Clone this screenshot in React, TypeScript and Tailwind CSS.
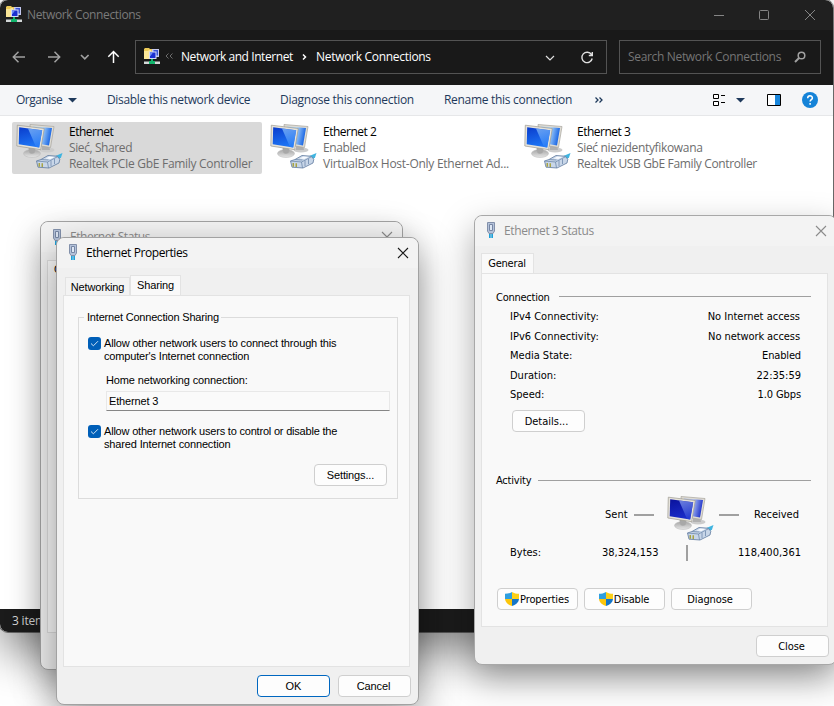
import type { ReactNode } from "react";

const segoe = "font-['Open_Sans','Noto_Sans',sans-serif]";
const tahoma = "font-['DejaVu_Sans_Condensed','DejaVu_Sans',sans-serif]";
const sans = "font-['Liberation_Sans',Arial,sans-serif]";

function FolderNetIcon() {
  return (
    <svg width="16" height="17" viewBox="0 0 16 17" className="shrink-0">
      <path d="M0 1l1-1h4l1 1h6v10H0z" fill="#ecca58" />
      <path d="M0 3h4l1-1h2v9H0z" fill="#fbe697" />
      <path d="M8 1h7v8H8z" fill="#c4c9f0" />
      <path d="M9.500 2H14v5.500H9.500z" fill="#3a54d4" />
      <path d="M5 3.500h7.500V11H5z" fill="#d3d9f6" />
      <path d="M6 4.500h5.500V10H6z" fill="#1a2fd0" />
      <path d="M6 4.500h3L6.500 8H6z" fill="#6c8cf4" />
      <path d="M7 11h2v2H7zM5 13h6v3H5z" fill="#12b46c" />
      <path d="M0 13.500h5V16H0zM11 13.500h5V16h-5z" fill="#d3d8d8" />
    </svg>
  );
}

function ComputersIcon({ dark = false }: { dark?: boolean }) {
  const id = dark ? "pc-dark" : "pc-light";
  return (
    <svg width="48" height="48" viewBox="0 0 48 48" className="shrink-0">
      <defs>
        <linearGradient id={id} x1="0" y1="0" x2=".3" y2="1">
          <stop offset="0" stopColor={dark ? "#0a129c" : "#0a3ccc"} />
          <stop offset="1" stopColor={dark ? "#1a2cc8" : "#1d74f4"} />
        </linearGradient>
        <linearGradient id={id + "-w"} x1="0" y1="0" x2=".3" y2="1">
          <stop offset="0" stopColor={dark ? "#8ea4f0" : "#8cc0fa"} />
          <stop offset="1" stopColor={dark ? "#2c44d4" : "#2f82f8"} />
        </linearGradient>
        <linearGradient id={id + "-b"} x1="0" y1="0" x2="1" y2=".2">
          <stop offset=".5" stopColor={dark ? "#a9bcf4" : "#a8d4fc"} />
          <stop offset="1" stopColor={dark ? "#2438cc" : "#1a66e4"} />
        </linearGradient>
        <linearGradient id={id + "-s"} x1="0" y1="0" x2="0" y2="1">
          <stop offset="0" stopColor="#a4a4a4" />
          <stop offset="1" stopColor="#e6e6e6" />
        </linearGradient>
      </defs>
      <ellipse cx="31" cy="27" rx="7.500" ry="2.500" fill="#cccccc" />
      <path d="M26 22h7l1 5h-8z" fill="#b0b0b0" />
      <path d="M14 1.500l24 2-3.500 21-19-3z" fill="#dfdcd4" stroke="#a8a59d" strokeWidth=".7" />
      <path d="M17 3.500l19 1.600-3 17.400L18 20z" fill={`url(#${id}-b)`} />
      <ellipse cx="16" cy="30.500" rx="8.500" ry="4" fill={`url(#${id}-s)`} stroke="#b8b8b8" strokeWidth=".5" />
      <path d="M12.500 25h7l-1 5q-3 1.500-5 0z" fill="#a8a8a8" />
      <path d="M1.300 2.200l27 3.300-3.600 21.200L.8 23z" fill="#e6e3db" stroke="#9c998f" strokeWidth=".7" />
      <path d="M3.200 4.300l23 2.900-3 17.200L2.700 21.300z" fill={`url(#${id})`} />
      <path d="M12 5.400l14.200 1.800-3 17.200-3.200-.4z" fill={`url(#${id}-w)`} opacity=".75" />
      <path d="M37 34l9.500-4-1.500 4.500-4 3z" fill="#3fb4e0" />
      <path d="M20.500 38l4.500-1.500 7-4 9 .7 2.800 3L43 40l-10 5-11-.8z" fill="#c8d6e8" stroke="#5f7a9e" strokeWidth=".8" />
      <path d="M20.500 38l11 1 10-5.300M31.500 39l1 6M25 36.500l7.500.5M35 37.500v5.500M38.500 36v5" fill="none" stroke="#6f89ac" strokeWidth=".8" />
      <path d="M22.500 40h1.500v3.800h-1.500zM25.500 40.200H27V44h-1.500z" fill="#a8a344" />
      <path d="M29.500 35.500l4-2 5 .5-4 2z" fill="#f8fbff" />
    </svg>
  );
}

function PlugIcon() {
  return (
    <svg width="10" height="17" viewBox="0 0 10 17" className="shrink-0">
      <path d="M1.500.5h7v8.500l-1.500 2.500H3L1.500 9z" fill="#b4c2da" stroke="#8290aa" />
      <path d="M3.500 2.500h3v6h-3z" fill="#dde6f3" stroke="#7686a4" />
      <path d="M3 12h1.700v4H3zM5.300 12H7v4H5.300z" fill="#1ea0d8" />
    </svg>
  );
}

function Shield() {
  return (
    <svg width="14" height="14" viewBox="0 0 14 14" className="shrink-0">
      <path d="M7 0C5 1.300 2.500 1.800 0 1.800V7h7z" fill="#2f9fe0" />
      <path d="M7 0c2 1.300 4.500 1.800 7 1.800V7H7z" fill="#fdd017" />
      <path d="M0 7c.4 3.500 3.500 6 7 7V7z" fill="#fcc60b" />
      <path d="M14 7c-.4 3.500-3.500 6-7 7V7z" fill="#1576c9" />
    </svg>
  );
}

function CloseX({ color }: { color: string }) {
  return (
    <svg width="12" height="12" viewBox="0 0 12 12" className="mb-px shrink-0">
      <path d="M1 1l10 10M11 1L1 11" stroke={color} strokeWidth="1.100" fill="none" />
    </svg>
  );
}

function Check() {
  return (
    <span className="flex h-[13px] w-[13px] shrink-0 items-center justify-center rounded-[3px] bg-[#005fb8]">
      <svg width="9" height="7" viewBox="0 0 9 7">
        <path d="M1 3.500L3.400 5.800 8 1.200" stroke="#cfe2f4" strokeWidth="1" fill="none" />
      </svg>
    </span>
  );
}

function Button({ children, className }: { children: ReactNode; className: string }) {
  return (
    <button
      className={`flex h-[22px] items-center justify-center whitespace-nowrap rounded-[4px] border bg-[#fdfdfd] leading-none ${className}`}
    >
      {children}
    </button>
  );
}

function Adapter({ name, status, device, selected, statusCls, deviceCls }: {
  name: string; status: string; device: string; selected?: boolean;
  statusCls: string; deviceCls: string;
}) {
  return (
    <div className={`flex h-[52px] w-[250px] rounded-[2px] ${selected ? "bg-[#d9d9d9]" : ""}`}>
      <div className="pl-1 pt-px"><ComputersIcon /></div>
      <div className="flex flex-col whitespace-nowrap pl-[5px] pt-[2px] text-[12px] leading-4 text-[#6d6d6d]">
        <span className="tracking-[-0.5px] text-black">{name}</span>
        <span className={statusCls}>{status}</span>
        <span className={deviceCls}>{device}</span>
      </div>
    </div>
  );
}

function MainWindow() {
  return (
    <div className={`absolute left-0 top-0 flex h-[632px] w-[833px] flex-col overflow-hidden rounded-[8px] bg-white text-[12px] ${segoe}`}>
      <header className="flex h-[30px] items-center bg-[#202020] pl-[6px] text-[#7b7b7b]">
        <div className="pb-[2px]"><FolderNetIcon /></div>
        <span className="w-[690px] whitespace-nowrap pl-[5px] tracking-[-0.36px]">Network Connections</span>
        <svg width="106" height="12" viewBox="0 0 106 12" className="mb-px" fill="none" stroke="#858585" strokeWidth="1">
          <path d="M2 6.500h10" />
          <rect x="47.500" y="1.500" width="9" height="9" rx="1" />
          <path d="M93 1l10 10M103 1L93 11" />
        </svg>
      </header>
      <nav className="flex h-[55px] items-center bg-[#191919] pb-px">
        <svg width="135" height="20" viewBox="0 0 135 20" fill="none" stroke="#a0a0a0" strokeWidth="1.500">
          <path d="M25 10H13.500M18.500 4.800L13.300 10l5.200 5.200" />
          <path d="M48 10h11.500M54.500 4.800L59.700 10l-5.200 5.200" />
          <path d="M81 8l3.800 3.800L88.600 8" strokeWidth="1.700" />
          <path d="M113.500 16V4.500M108.300 9.700l5.200-5.200 5.200 5.200" stroke="#fff" />
        </svg>
        <div className="flex h-[34px] w-[472px] items-center whitespace-nowrap border border-[#535353] pl-2 text-white">
          <div className="pb-px"><FolderNetIcon /></div>
          <svg width="21" height="10" viewBox="0 0 21 10" className="mb-[3px]" fill="none" stroke="#6d6d6d">
            <path d="M8.500 2.500L6 5l2.500 2.500M12.500 2.500L10 5l2.500 2.500" />
          </svg>
          <span className="w-[121px] tracking-[-0.43px]">Network and Internet</span>
          <svg width="14" height="10" viewBox="0 0 14 10" fill="none" stroke="#fff" strokeWidth="1.500">
            <path d="M1 2.500L3.500 5 1 7.500" />
          </svg>
          <span className="w-[229px] tracking-[-0.3px]">Network Connections</span>
          <svg width="52" height="14" viewBox="0 0 52 14" fill="none" stroke="#e0e0e0" strokeWidth="1.200">
            <path d="M1 6l4 4 4-4" />
            <path d="M46.500 4.600A5.200 5.200 0 1 0 47.200 8.500M47.300 2v3.500h-3.500" strokeWidth="1.400" />
          </svg>
        </div>
        <div className="ml-3 flex h-[34px] w-[202px] items-center justify-between whitespace-nowrap border border-[#535353] pl-2 pr-[14px] text-[#757575]">
          <span className="tracking-[-0.33px]">Search Network Connections</span>
          <svg width="12" height="12" viewBox="0 0 12 12" fill="none" stroke="#a0a0a0" strokeWidth="1.500">
            <circle cx="7.500" cy="4.500" r="3.300" />
            <path d="M5 7L1 11" strokeWidth="2" />
          </svg>
        </div>
      </nav>
      <div className="flex h-[31px] shrink-0 items-center whitespace-nowrap border-b border-[#e6e7e9] bg-[#f5f6f8] pl-4 text-[#1e395b]">
        <span className="w-[52px] tracking-[-0.5px]">Organise</span>
        <svg width="39" height="5" viewBox="0 0 39 5"><path d="M0 0h9L4.500 4.500z" fill="#1e395b" /></svg>
        <span className="w-[173px] tracking-[-0.35px]">Disable this network device</span>
        <span className="w-[164px] tracking-[-0.28px]">Diagnose this connection</span>
        <span className="w-[150px] tracking-[-0.3px]">Rename this connection</span>
        <svg width="118" height="8" viewBox="0 0 118 8" fill="none" stroke="#1e395b" strokeWidth="1.300">
          <path d="M1.500 1.500L4 4 1.500 6.500M5.500 1.500L8 4 5.500 6.500" />
        </svg>
        <svg width="110" height="16" viewBox="0 0 110 16">
          <path d="M1.500 2.500h5v4h-5zM1.500 9.500h5v4h-5z" fill="#fff" stroke="#000" />
          <path d="M9 3.500h4M9 10.500h4" stroke="#000" />
          <path d="M24 6h9l-4.500 4.500z" fill="#1e395b" />
          <path d="M55.500 2.500h13v11h-13z" fill="#fff" stroke="#000" />
          <path d="M63 3h5v10h-5z" fill="#1886dc" />
          <circle cx="98" cy="8" r="8" fill="#1583d8" />
          <path d="M95.700 6.200c0-3.200 4.700-3 4.700-.3 0 1.700-2.300 1.800-2.300 3.600M98.100 11v1.700" stroke="#fff" strokeWidth="1.500" fill="none" />
        </svg>
      </div>
      <main className="flex flex-1 gap-1 pl-3 pt-[6px]">
        <Adapter selected name="Ethernet" status="Sieć, Shared" device="Realtek PCIe GbE Family Controller" statusCls="tracking-[-0.4px]" deviceCls="tracking-[-0.3px]" />
        <Adapter name="Ethernet 2" status="Enabled" device="VirtualBox Host-Only Ethernet Ad..." statusCls="tracking-[-0.4px]" deviceCls="tracking-[-0.27px]" />
        <Adapter name="Ethernet 3" status="Sieć niezidentyfikowana" device="Realtek USB GbE Family Controller" statusCls="tracking-[-0.34px]" deviceCls="tracking-[-0.36px]" />
      </main>
      <footer className="flex h-[23px] items-center bg-[#1b1b1b] pl-3 tracking-[-0.2px] text-[#d6d6d6]">3 items</footer>
    </div>
  );
}

function StatusBehind() {
  return (
    <div className="absolute left-[40px] top-[221px] flex h-[449px] w-[363px] flex-col rounded-[8px] border border-[#a2a2a2] bg-[#f0f0f0] shadow-[0_14px_34px_rgba(0,0,0,0.28)]">
      <div className={`flex h-[30px] items-center rounded-t-[8px] bg-[#f3f3f3] pl-[11px] pr-[9px] text-[12px] text-[#8b8b8b] ${segoe}`}>
        <PlugIcon />
        <span className="flex-1 whitespace-nowrap pl-[8px] tracking-[-0.42px]">Ethernet Status</span>
        <CloseX color="#8b8b8b" />
      </div>
      <div className={`mx-[6px] mt-[8px] h-[373px] border border-[#dcdcdc] bg-[#f9f9f9] pl-[6px] pt-[2px] text-[11px] leading-[13px] ${tahoma}`}>General</div>
    </div>
  );
}

function PropertiesDialog() {
  return (
    <div className={`absolute left-[56px] top-[237px] flex h-[468px] w-[363px] flex-col rounded-[8px] border border-[#a2a2a2] bg-[#f0f0f0] text-[11px] text-black shadow-[0_14px_38px_rgba(0,0,0,0.4)] ${sans}`}>
      <div className={`flex h-[30px] items-center rounded-t-[8px] bg-[#f3f3f3] pl-[11px] pr-[9px] text-[12px] ${segoe}`}>
        <div className="pb-px"><PlugIcon /></div>
        <span className="flex-1 whitespace-nowrap pl-[8px] tracking-[-0.42px]">Ethernet Properties</span>
        <CloseX color="#1a1a1a" />
      </div>
      <div className="flex h-[27px] items-end pl-[8px]">
        <div className="flex h-[18px] w-[65px] items-center justify-center border border-b-0 border-[#e3e3e3] bg-[#f3f3f3] pt-px tracking-[-0.15px]">Networking</div>
        <div className="-mb-px flex h-[21px] w-[51px] items-center justify-center border border-b-0 border-[#e3e3e3] bg-[#f9f9f9] pb-[2px] tracking-[-0.15px]">Sharing</div>
      </div>
      <div className="mx-[6px] h-[372px] w-[347px] border border-[#e3e3e3] bg-[#f9f9f9] pl-[14px] pt-[14px]">
        <section className="flex h-[189px] w-[320px] flex-col">
          <div className="flex h-[14px] items-center">
            <span className="mt-[7px] h-[7px] w-[6px] shrink-0 border-l border-t border-[#dcdcdc]" />
            <span className="w-[137px] whitespace-nowrap pl-[3px] leading-[14px] tracking-[-0.19px]">Internet Connection Sharing</span>
            <span className="mt-[7px] h-[7px] flex-1 border-r border-t border-[#dcdcdc]" />
          </div>
          <div className="flex-1 border border-t-0 border-[#dcdcdc] pl-[9px] pt-[13px] leading-[13px]">
            <div className="flex gap-[3px] whitespace-nowrap">
              <Check />
              <p className="tracking-[-0.16px]">Allow other network users to connect through this<br />computer's Internet connection</p>
            </div>
            <p className="pl-[18px] pt-[11px] tracking-[-0.12px]">Home networking connection:</p>
            <div className="ml-[18px] mt-[4px] flex h-[20px] w-[284px] items-center border border-[#e8e8e8] border-b-[#868686] bg-[#fafafa] pl-[2px] tracking-[-0.15px]">Ethernet 3</div>
            <div className="mt-[14px] flex gap-[3px] whitespace-nowrap">
              <Check />
              <p><span className="tracking-[-0.2px]">Allow other network users to control or disable the</span><br /><span className="tracking-[-0.15px]">shared Internet connection</span></p>
            </div>
            <div className="flex justify-end pr-[10px] pt-[13px]">
              <Button className="w-[73px] border-[#cfcfcf] tracking-[-0.15px]">Settings...</Button>
            </div>
          </div>
        </section>
      </div>
      <div className="flex justify-end gap-[8px] pr-[7px] pt-[8px]">
        <Button className="w-[73px] border-[#0067c0]">OK</Button>
        <Button className="w-[73px] border-[#cfcfcf] pr-[2px] tracking-[-0.1px]">Cancel</Button>
      </div>
    </div>
  );
}

const rows = [
  { label: "IPv4 Connectivity:", value: "No Internet access", h: "h-[20px]", pad: "pr-px" },
  { label: "IPv6 Connectivity:", value: "No network access", h: "h-[19px]", pad: "pr-px tracking-[-0.08px]" },
  { label: "Media State:", value: "Enabled", h: "h-[20px]", pad: "tracking-[-0.15px]" },
  { label: "Duration:", value: "22:35:59", h: "h-[19px]", pad: "" },
  { label: "Speed:", value: "1.0 Gbps", h: "h-[19px]", pad: "tracking-[-0.1px]" },
];

function Ethernet3Status() {
  return (
    <div className={`absolute left-[474px] top-[215px] flex h-[450px] w-[363px] flex-col rounded-[8px] border border-[#a8a8a8] bg-[#f0f0f0] text-[11px] text-black shadow-[0_14px_34px_rgba(0,0,0,0.34)] ${tahoma}`}>
      <div className={`flex h-[30px] items-center rounded-t-[8px] bg-[#f3f3f3] pl-[11px] pr-[9px] text-[12px] text-[#8b8b8b] ${segoe}`}>
        <div className="pb-px"><PlugIcon /></div>
        <span className="flex-1 whitespace-nowrap pl-[8px] tracking-[-0.38px]">Ethernet 3 Status</span>
        <CloseX color="#8b8b8b" />
      </div>
      <div className="flex h-[27px] items-end pl-[6px]">
        <div className="-mb-px flex h-[21px] w-[53px] items-center justify-center border border-b-0 border-[#e3e3e3] bg-[#f9f9f9] pr-px tracking-[-0.2px]">General</div>
      </div>
      <div className="mx-[6px] h-[354px] w-[347px] border border-[#e3e3e3] bg-[#f9f9f9] pl-[13px] pt-[17px]">
        <div className="flex h-[14px] w-[316px] items-center">
          <span className="w-[64px] whitespace-nowrap pl-px tracking-[-0.25px]">Connection</span>
          <span className="mb-[3px] h-px flex-1 bg-[#a0a0a0]" />
        </div>
        <div className="w-[306px] pl-[15px] pt-[5px]">
          {rows.map((r) => (
            <div key={r.label} className={`flex justify-between whitespace-nowrap leading-[14px] ${r.h}`}>
              <span>{r.label}</span>
              <span className={r.pad}>{r.value}</span>
            </div>
          ))}
        </div>
        <Button className="ml-[17px] mt-[3px] w-[73px] border-[#cfcfcf] pr-[4px] pt-px">Details...</Button>
        <div className="mt-[42px] flex h-[14px] w-[316px] items-center">
          <span className="w-[43px] pl-px tracking-[-0.2px]">Activity</span>
          <span className="mb-px h-px flex-1 bg-[#a0a0a0]" />
        </div>
        <div className="mt-[7px] flex h-[50px] pl-[110px]">
          <span className="w-[29px] pt-[13px] leading-[14px]">Sent</span>
          <span className="mt-[19px] h-[2px] w-[20px] bg-[#a0a0a0]" />
          <div className="ml-[13px] w-[72px]"><ComputersIcon dark /></div>
          <span className="-ml-[20px] mt-[19px] h-[2px] w-[20px] bg-[#a0a0a0]" />
          <span className="pl-[15px] pt-[13px] leading-[14px]">Received</span>
        </div>
        <div className="flex h-[16px] w-[306px] items-center pl-[15px]">
          <span className="w-[92px]">Bytes:</span>
          <span className="w-[84px]">38,324,153</span>
          <span className="h-[16px] w-[2px] bg-[#a0a0a0]" />
          <span className="flex-1 text-right">118,400,361</span>
        </div>
        <div className="mt-[27px] flex gap-[6px] pl-[2px]">
          <Button className="w-[81px] border-[#cfcfcf] pr-px tracking-[-0.1px]"><Shield /><span className="pl-px">Properties</span></Button>
          <Button className="w-[81px] border-[#cfcfcf] pr-px tracking-[-0.2px]"><Shield /><span className="pl-px">Disable</span></Button>
          <Button className="w-[81px] border-[#cfcfcf] pr-[3px] tracking-[-0.1px]">Diagnose</Button>
        </div>
      </div>
      <div className="flex pl-[281px] pt-[8px]">
        <Button className="w-[73px] border-[#cfcfcf] pr-[2px] tracking-[-0.1px]">Close</Button>
      </div>
    </div>
  );
}

export default function App() {
  return (
    <div className="relative h-[706px] w-[834px] overflow-hidden bg-white">
      <div className="absolute left-0 top-0 h-[632px] w-[833px] rounded-[8px] shadow-[0_18px_48px_rgba(0,0,0,0.5),0_0_0_1px_#8a8a8a]" />
      <MainWindow />
      <Ethernet3Status />
      <StatusBehind />
      <PropertiesDialog />
    </div>
  );
}
